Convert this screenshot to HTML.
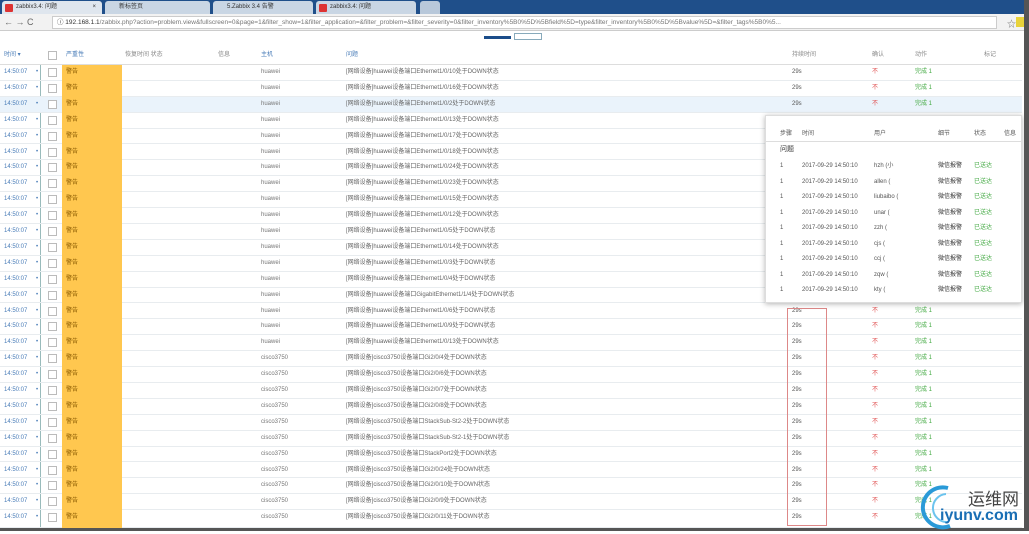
<!DOCTYPE html>
<html><head><meta charset="utf-8"><style>
*{margin:0;padding:0;box-sizing:border-box}
html,body{width:1029px;height:534px;overflow:hidden}
body{background:#fff;font-family:"Liberation Sans","Noto Sans CJK SC",sans-serif;font-size:6px;color:#555;position:relative}
.abs{position:absolute}
#tabs{left:0;top:0;width:1029px;height:14px;background:#1f4f8a}
.tab{position:absolute;top:1px;height:13px;background:#dfe6ee;font-size:6px;line-height:12px;color:#333;padding:0 0 0 14px;border-radius:3px 3px 0 0}
.fav{position:absolute;left:3px;top:3px;width:8px;height:8px;background:#d33;border-radius:1px}
#addr{left:0;top:14px;width:1029px;height:17px;background:#f2f2f2;border-bottom:1px solid #ccc}
#url{left:52px;top:16px;width:945px;height:13px;background:#fff;border:1px solid #ccc;font-size:6.5px;line-height:11px;color:#777;padding:0 4px;white-space:nowrap;overflow:hidden}
#strip{left:0;top:31px;width:1029px;height:15px;background:#fff}
.row{position:absolute;left:0;width:1022px;height:15.9px;border-bottom:1px solid #e8ecef}
.row span{position:absolute;top:0;line-height:15px;white-space:nowrap}
.t{left:4px;color:#4a7db8}
.ar{left:36px;color:#4a7db8}
.row .cb{left:48px;top:3px;width:9px;height:9px;border:1px solid #bbb;background:#fff}
.row .sv{left:62px;width:60px;height:16px;background:#ffc74f;padding:0 4px;color:#8a5a00}
.h{left:261px;color:#777}
.p{left:346px;color:#666}
.d{left:792px;color:#555}
.a{left:872px;color:#e05050}
.g{left:915px;color:#4a4}
#vline{left:40px;top:65px;width:1px;height:463px;background:#9bb}
#pop{left:765px;top:115px;width:257px;height:188px;background:#fff;border:1px solid #ddd;box-shadow:0 1px 5px rgba(0,0,0,.3)}
.pr{position:absolute;left:0;width:257px;height:16px}
.pr span{position:absolute;top:0;line-height:16px;white-space:nowrap}
.hd{position:absolute;top:0;line-height:19px}
</style></head><body>
<div id="tabs" class="abs">
<div class="tab" style="left:2px;width:100px"><i class="fav"></i>zabbix3.4: 问题 <b style="position:absolute;right:6px;font-weight:normal">×</b></div>
<div class="tab" style="left:105px;width:105px;background:#c9d6e4">新标签页</div>
<div class="tab" style="left:213px;width:100px;background:#c9d6e4">5.Zabbix 3.4 告警</div>
<div class="tab" style="left:316px;width:100px;background:#c9d6e4"><i class="fav"></i>zabbix3.4: 问题</div>
<div class="tab" style="left:420px;width:20px;background:#b8c8da"></div>
</div>
<div id="addr" class="abs"><span class="abs" style="left:4px;top:3px;font-size:9px;color:#666">← → C</span>
<span class="abs" style="left:1007px;top:3px;font-size:9px;color:#777">☆</span><span class="abs" style="left:1016px;top:3px;width:8px;height:10px;background:#e8d23a"></span></div>
<div id="url" class="abs"><b style="color:#333;font-weight:normal">ⓘ 192.168.1.1</b>/zabbix.php?action=problem.view&amp;fullscreen=0&amp;page=1&amp;filter_show=1&amp;filter_application=&amp;filter_problem=&amp;filter_severity=0&amp;filter_inventory%5B0%5D%5Bfield%5D=type&amp;filter_inventory%5B0%5D%5Bvalue%5D=&amp;filter_tags%5B0%5...</div>
<div id="strip" class="abs"><span class="abs" style="left:484px;top:5px;width:27px;height:3px;background:#1b4d8a"></span><span class="abs" style="left:514px;top:2px;width:28px;height:7px;border:1px solid #8ab"></span></div>
<div class="abs" style="left:0;top:46px;width:1022px;height:19px;border-bottom:1px solid #ddd">
<span class="hd" style="left:4px;color:#4a7db8">时间 ▾</span><span class="abs" style="left:48px;top:5px;width:9px;height:9px;border:1px solid #bbb"></span>
<span class="hd" style="left:66px;color:#4a7db8">严重性</span><span class="hd" style="left:125px;color:#888">恢复时间 状态</span><span class="hd" style="left:218px;color:#888">信息</span>
<span class="hd" style="left:261px;color:#4a7db8">主机</span><span class="hd" style="left:346px;color:#4a7db8">问题</span>
<span class="hd" style="left:792px;color:#888">持续时间</span><span class="hd" style="left:872px;color:#888">确认</span><span class="hd" style="left:915px;color:#888">动作</span><span class="hd" style="left:984px;color:#888">标记</span></div>
<div id="vline" class="abs"></div>

<div class="row" style="top:65px"><span class="t">14:50:07</span><span class="ar">•</span><span class="cb"></span><span class="sv">警告</span><span class="h">huawei</span><span class="p">[网络设备]huawei设备端口Ethernet1/0/10处于DOWN状态</span><span class="d">29s</span><span class="a">不</span><span class="g">完成 1</span></div>
<div class="row" style="top:80.9px"><span class="t">14:50:07</span><span class="ar">•</span><span class="cb"></span><span class="sv">警告</span><span class="h">huawei</span><span class="p">[网络设备]huawei设备端口Ethernet1/0/16处于DOWN状态</span><span class="d">29s</span><span class="a">不</span><span class="g">完成 1</span></div>
<div class="row" style="top:96.8px;background:#eaf3fb"><span class="t">14:50:07</span><span class="ar">•</span><span class="cb"></span><span class="sv">警告</span><span class="h">huawei</span><span class="p">[网络设备]huawei设备端口Ethernet1/0/2处于DOWN状态</span><span class="d">29s</span><span class="a">不</span><span class="g">完成 1</span></div>
<div class="row" style="top:112.7px"><span class="t">14:50:07</span><span class="ar">•</span><span class="cb"></span><span class="sv">警告</span><span class="h">huawei</span><span class="p">[网络设备]huawei设备端口Ethernet1/0/13处于DOWN状态</span><span class="d">29s</span></div>
<div class="row" style="top:128.6px"><span class="t">14:50:07</span><span class="ar">•</span><span class="cb"></span><span class="sv">警告</span><span class="h">huawei</span><span class="p">[网络设备]huawei设备端口Ethernet1/0/17处于DOWN状态</span><span class="d">29s</span></div>
<div class="row" style="top:144.5px"><span class="t">14:50:07</span><span class="ar">•</span><span class="cb"></span><span class="sv">警告</span><span class="h">huawei</span><span class="p">[网络设备]huawei设备端口Ethernet1/0/18处于DOWN状态</span><span class="d">29s</span></div>
<div class="row" style="top:160.4px"><span class="t">14:50:07</span><span class="ar">•</span><span class="cb"></span><span class="sv">警告</span><span class="h">huawei</span><span class="p">[网络设备]huawei设备端口Ethernet1/0/24处于DOWN状态</span><span class="d">29s</span></div>
<div class="row" style="top:176.3px"><span class="t">14:50:07</span><span class="ar">•</span><span class="cb"></span><span class="sv">警告</span><span class="h">huawei</span><span class="p">[网络设备]huawei设备端口Ethernet1/0/23处于DOWN状态</span><span class="d">29s</span></div>
<div class="row" style="top:192.2px"><span class="t">14:50:07</span><span class="ar">•</span><span class="cb"></span><span class="sv">警告</span><span class="h">huawei</span><span class="p">[网络设备]huawei设备端口Ethernet1/0/15处于DOWN状态</span><span class="d">29s</span></div>
<div class="row" style="top:208.1px"><span class="t">14:50:07</span><span class="ar">•</span><span class="cb"></span><span class="sv">警告</span><span class="h">huawei</span><span class="p">[网络设备]huawei设备端口Ethernet1/0/12处于DOWN状态</span><span class="d">29s</span></div>
<div class="row" style="top:224px"><span class="t">14:50:07</span><span class="ar">•</span><span class="cb"></span><span class="sv">警告</span><span class="h">huawei</span><span class="p">[网络设备]huawei设备端口Ethernet1/0/5处于DOWN状态</span><span class="d">29s</span></div>
<div class="row" style="top:239.9px"><span class="t">14:50:07</span><span class="ar">•</span><span class="cb"></span><span class="sv">警告</span><span class="h">huawei</span><span class="p">[网络设备]huawei设备端口Ethernet1/0/14处于DOWN状态</span><span class="d">29s</span></div>
<div class="row" style="top:255.8px"><span class="t">14:50:07</span><span class="ar">•</span><span class="cb"></span><span class="sv">警告</span><span class="h">huawei</span><span class="p">[网络设备]huawei设备端口Ethernet1/0/3处于DOWN状态</span><span class="d">29s</span></div>
<div class="row" style="top:271.7px"><span class="t">14:50:07</span><span class="ar">•</span><span class="cb"></span><span class="sv">警告</span><span class="h">huawei</span><span class="p">[网络设备]huawei设备端口Ethernet1/0/4处于DOWN状态</span><span class="d">29s</span></div>
<div class="row" style="top:287.6px"><span class="t">14:50:07</span><span class="ar">•</span><span class="cb"></span><span class="sv">警告</span><span class="h">huawei</span><span class="p">[网络设备]huawei设备端口GigabitEthernet1/1/4处于DOWN状态</span><span class="d">29s</span></div>
<div class="row" style="top:303.5px"><span class="t">14:50:07</span><span class="ar">•</span><span class="cb"></span><span class="sv">警告</span><span class="h">huawei</span><span class="p">[网络设备]huawei设备端口Ethernet1/0/6处于DOWN状态</span><span class="d">29s</span><span class="a">不</span><span class="g">完成 1</span></div>
<div class="row" style="top:319.4px"><span class="t">14:50:07</span><span class="ar">•</span><span class="cb"></span><span class="sv">警告</span><span class="h">huawei</span><span class="p">[网络设备]huawei设备端口Ethernet1/0/9处于DOWN状态</span><span class="d">29s</span><span class="a">不</span><span class="g">完成 1</span></div>
<div class="row" style="top:335.3px"><span class="t">14:50:07</span><span class="ar">•</span><span class="cb"></span><span class="sv">警告</span><span class="h">huawei</span><span class="p">[网络设备]huawei设备端口Ethernet1/0/13处于DOWN状态</span><span class="d">29s</span><span class="a">不</span><span class="g">完成 1</span></div>
<div class="row" style="top:351.2px"><span class="t">14:50:07</span><span class="ar">•</span><span class="cb"></span><span class="sv">警告</span><span class="h">cisco3750</span><span class="p">[网络设备]cisco3750设备端口Gi2/0/4处于DOWN状态</span><span class="d">29s</span><span class="a">不</span><span class="g">完成 1</span></div>
<div class="row" style="top:367.1px"><span class="t">14:50:07</span><span class="ar">•</span><span class="cb"></span><span class="sv">警告</span><span class="h">cisco3750</span><span class="p">[网络设备]cisco3750设备端口Gi2/0/6处于DOWN状态</span><span class="d">29s</span><span class="a">不</span><span class="g">完成 1</span></div>
<div class="row" style="top:383px"><span class="t">14:50:07</span><span class="ar">•</span><span class="cb"></span><span class="sv">警告</span><span class="h">cisco3750</span><span class="p">[网络设备]cisco3750设备端口Gi2/0/7处于DOWN状态</span><span class="d">29s</span><span class="a">不</span><span class="g">完成 1</span></div>
<div class="row" style="top:398.9px"><span class="t">14:50:07</span><span class="ar">•</span><span class="cb"></span><span class="sv">警告</span><span class="h">cisco3750</span><span class="p">[网络设备]cisco3750设备端口Gi2/0/8处于DOWN状态</span><span class="d">29s</span><span class="a">不</span><span class="g">完成 1</span></div>
<div class="row" style="top:414.8px"><span class="t">14:50:07</span><span class="ar">•</span><span class="cb"></span><span class="sv">警告</span><span class="h">cisco3750</span><span class="p">[网络设备]cisco3750设备端口StackSub-St2-2处于DOWN状态</span><span class="d">29s</span><span class="a">不</span><span class="g">完成 1</span></div>
<div class="row" style="top:430.7px"><span class="t">14:50:07</span><span class="ar">•</span><span class="cb"></span><span class="sv">警告</span><span class="h">cisco3750</span><span class="p">[网络设备]cisco3750设备端口StackSub-St2-1处于DOWN状态</span><span class="d">29s</span><span class="a">不</span><span class="g">完成 1</span></div>
<div class="row" style="top:446.6px"><span class="t">14:50:07</span><span class="ar">•</span><span class="cb"></span><span class="sv">警告</span><span class="h">cisco3750</span><span class="p">[网络设备]cisco3750设备端口StackPort2处于DOWN状态</span><span class="d">29s</span><span class="a">不</span><span class="g">完成 1</span></div>
<div class="row" style="top:462.5px"><span class="t">14:50:07</span><span class="ar">•</span><span class="cb"></span><span class="sv">警告</span><span class="h">cisco3750</span><span class="p">[网络设备]cisco3750设备端口Gi2/0/24处于DOWN状态</span><span class="d">29s</span><span class="a">不</span><span class="g">完成 1</span></div>
<div class="row" style="top:478.4px"><span class="t">14:50:07</span><span class="ar">•</span><span class="cb"></span><span class="sv">警告</span><span class="h">cisco3750</span><span class="p">[网络设备]cisco3750设备端口Gi2/0/10处于DOWN状态</span><span class="d">29s</span><span class="a">不</span><span class="g">完成 1</span></div>
<div class="row" style="top:494.3px"><span class="t">14:50:07</span><span class="ar">•</span><span class="cb"></span><span class="sv">警告</span><span class="h">cisco3750</span><span class="p">[网络设备]cisco3750设备端口Gi2/0/9处于DOWN状态</span><span class="d">29s</span><span class="a">不</span><span class="g">完成 1</span></div>
<div class="row" style="top:510.2px;height:17.8px"><span class="t">14:50:07</span><span class="ar">•</span><span class="cb"></span><span class="sv" style="height:18px">警告</span><span class="h">cisco3750</span><span class="p">[网络设备]cisco3750设备端口Gi2/0/11处于DOWN状态</span><span class="d">29s</span><span class="a">不</span><span class="g">完成 1</span></div>

<div class="abs" style="left:787px;top:308px;width:40px;height:218px;border:1px solid #d88"></div>

<div id="pop" class="abs">
<div class="pr" style="top:10px;border-bottom:1px solid #ddd"><span style="left:14px">步骤</span><span style="left:36px">时间</span><span style="left:108px">用户</span><span style="left:172px">细节</span><span style="left:208px">状态</span><span style="left:238px">信息</span></div>
<div class="pr" style="top:26px"><span style="left:14px;font-size:7px;color:#333">问题</span></div>
<div class="pr" style="top:42px"><span style="left:14px">1</span><span style="left:36px">2017-09-29 14:50:10</span><span style="left:108px">hzh (小</span><span style="left:172px;color:#333">微信报警</span><span style="left:208px;color:#4a4">已送达</span></div>
<div class="pr" style="top:57.5px"><span style="left:14px">1</span><span style="left:36px">2017-09-29 14:50:10</span><span style="left:108px">allen (</span><span style="left:172px;color:#333">微信报警</span><span style="left:208px;color:#4a4">已送达</span></div>
<div class="pr" style="top:73px"><span style="left:14px">1</span><span style="left:36px">2017-09-29 14:50:10</span><span style="left:108px">liubaibo (</span><span style="left:172px;color:#333">微信报警</span><span style="left:208px;color:#4a4">已送达</span></div>
<div class="pr" style="top:88.5px"><span style="left:14px">1</span><span style="left:36px">2017-09-29 14:50:10</span><span style="left:108px">unar (</span><span style="left:172px;color:#333">微信报警</span><span style="left:208px;color:#4a4">已送达</span></div>
<div class="pr" style="top:104px"><span style="left:14px">1</span><span style="left:36px">2017-09-29 14:50:10</span><span style="left:108px">zzh (</span><span style="left:172px;color:#333">微信报警</span><span style="left:208px;color:#4a4">已送达</span></div>
<div class="pr" style="top:119.5px"><span style="left:14px">1</span><span style="left:36px">2017-09-29 14:50:10</span><span style="left:108px">cjs (</span><span style="left:172px;color:#333">微信报警</span><span style="left:208px;color:#4a4">已送达</span></div>
<div class="pr" style="top:135px"><span style="left:14px">1</span><span style="left:36px">2017-09-29 14:50:10</span><span style="left:108px">ccj (</span><span style="left:172px;color:#333">微信报警</span><span style="left:208px;color:#4a4">已送达</span></div>
<div class="pr" style="top:150.5px"><span style="left:14px">1</span><span style="left:36px">2017-09-29 14:50:10</span><span style="left:108px">zqw (</span><span style="left:172px;color:#333">微信报警</span><span style="left:208px;color:#4a4">已送达</span></div>
<div class="pr" style="top:166px"><span style="left:14px">1</span><span style="left:36px">2017-09-29 14:50:10</span><span style="left:108px">kty (</span><span style="left:172px;color:#333">微信报警</span><span style="left:208px;color:#4a4">已送达</span></div>
</div>

<div class="abs" style="left:1024px;top:0;width:5px;height:534px;background:#555"></div>
<div class="abs" style="left:0;top:528px;width:1029px;height:3px;background:#555"></div>
<div class="abs" style="left:0;top:531px;width:1029px;height:3px;background:#fff"></div>
<svg class="abs" style="left:920px;top:482px" width="50" height="48"><path d="M28 6 A20 20 0 1 0 30 44" fill="none" stroke="#2a9ad8" stroke-width="4"/><path d="M26 12 A14 14 0 1 0 28 40" fill="none" stroke="#6cc4ee" stroke-width="2"/></svg>
<div class="abs" style="left:968px;top:485px;font-size:17px;color:#444">运维网</div>
<div class="abs" style="left:940px;top:507px;font-size:16px;font-weight:bold;color:#1a6fb5">iyunv.com</div>
</body></html>
